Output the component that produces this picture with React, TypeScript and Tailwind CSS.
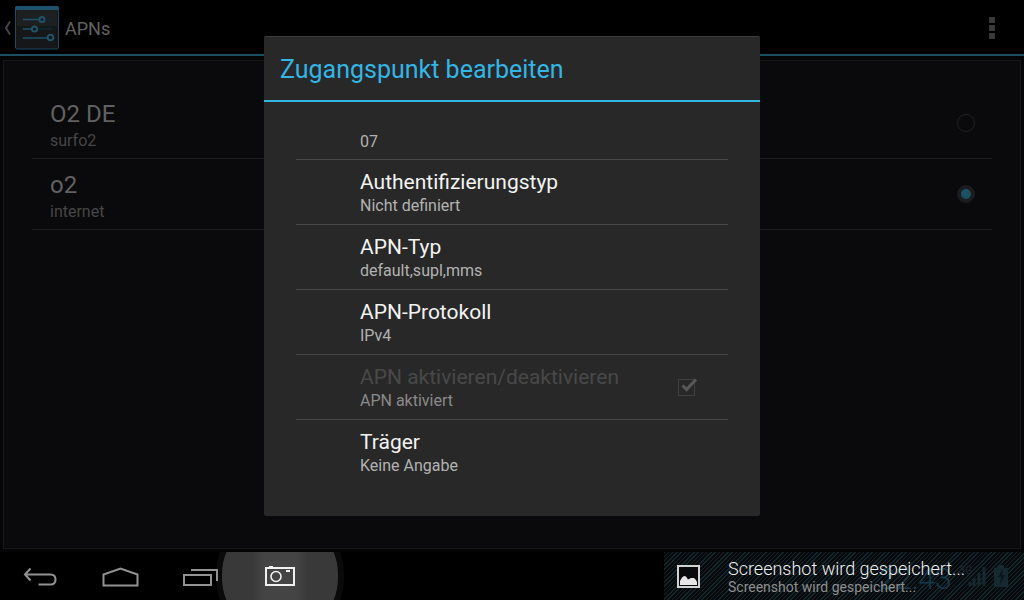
import React from "react";

type Apn = { name: string; apn: string; selected: boolean };

const apns: Apn[] = [
  { name: "O2 DE", apn: "surfo2", selected: false },
  { name: "o2", apn: "internet", selected: true },
];

const settings = [
  { title: "Authentifizierungstyp", summary: "Nicht definiert" },
  { title: "APN-Typ", summary: "default,supl,mms" },
  { title: "APN-Protokoll", summary: "IPv4" },
];

function SettingsIcon() {
  return (
    <svg width="44" height="44" viewBox="0 0 44 44" aria-hidden="true">
      <rect x="0.5" y="0.5" width="43" height="42.5" rx="2" fill="#161719" stroke="#1c4c60" />
      <rect x="2" y="4" width="40" height="16" fill="#1e1f21" />
      <rect x="0" y="0" width="44" height="4" rx="1.5" fill="#1e526a" />
      <g stroke="#1e5368" strokeWidth="1.5" fill="none">
        <path d="M8 13.500H24M8 23H16M8 32H32" />
        <circle cx="27" cy="13.500" r="2.6" strokeWidth="2" />
        <circle cx="19.500" cy="23" r="2.6" strokeWidth="2" />
        <circle cx="35.500" cy="31.500" r="2.8" strokeWidth="2" />
      </g>
      <path d="M30 13.500H37M23 23H37" stroke="#0e2a3a" strokeWidth="1.500" />
    </svg>
  );
}

function Header() {
  return (
    <header className="flex h-14 shrink-0 items-center border-b-2 border-[#1c4f63] bg-black pl-1 pr-[29px] pt-0.5">
      <button type="button" aria-label="Zurück" className="flex items-center gap-1">
        <svg width="7" height="16" viewBox="0 0 7 16" aria-hidden="true">
          <path d="M6 1.500L2 8L6 14.500" fill="none" stroke="#454545" strokeWidth="2" />
        </svg>
        <SettingsIcon />
      </button>
      <h1 className="ml-1.5 pt-0.5 text-lg text-[#616161]">APNs</h1>
      <button type="button" aria-label="Weitere Optionen" className="ml-auto flex flex-col gap-0.5">
        <span className="size-1.5 bg-[#3a3a3a]" />
        <span className="size-1.5 bg-[#3a3a3a]" />
        <span className="size-1.5 bg-[#3a3a3a]" />
      </button>
    </header>
  );
}

function ApnList() {
  return (
    <section className="flex flex-1 flex-col bg-[#050506] px-[3px] pb-[3px] pt-1">
      <div className="flex-1 border border-[#17171a] bg-[#0a0a0c] px-7 pt-[27px]">
        {apns.map((a) => (
          <label key={a.name} className="flex h-[71px] items-center border-b border-[#1c1c1e] pl-[18px] pr-[17px]">
            <span className="flex flex-1 flex-col pt-1">
              <span className="text-2xl leading-8 text-[#616161]">{a.name}</span>
              <span className="text-base leading-[22px] text-[#464646]">{a.apn}</span>
            </span>
            <input
              type="radio"
              name="apn"
              defaultChecked={a.selected}
              className="size-[18px] appearance-none rounded-full border border-[#222224] checked:border-[4px] checked:border-[#1b1c1e] checked:bg-[#1e5065]"
            />
          </label>
        ))}
      </div>
    </section>
  );
}

function EditDialog() {
  const row = "flex h-[65px] items-center border-b border-[#484848] pl-16 pr-[30px] pt-0.5";
  return (
    <div
      role="dialog"
      aria-labelledby="dialog-title"
      className="w-[496px] max-w-full rounded-[2px] border-t border-[#3d3d3d] bg-[#282828]"
    >
      <h2 id="dialog-title" className="h-[65px] border-b-2 border-[#33b5e5] px-4 text-[25px] leading-[66px] text-[#33b5e5]">
        Zugangspunkt bearbeiten
      </h2>
      <div className="px-8 pb-[31px] pt-[30px]">
        <p className="border-b border-[#484848] pb-[7px] pl-16 text-base leading-5 text-[#b2b2b2]">07</p>
        {settings.map((s) => (
          <button key={s.title} type="button" className={`${row} w-full text-left`}>
            <span className="flex flex-col">
              <span className="text-[21px] leading-[26px] text-[#f3f3f3]">{s.title}</span>
              <span className="text-base leading-[22px] text-[#b2b2b2]">{s.summary}</span>
            </span>
          </button>
        ))}
        <label className={row}>
          <span className="flex flex-1 flex-col">
            <span className="text-[21px] leading-[26px] text-[#484848]">APN aktivieren/deaktivieren</span>
            <span className="text-base leading-[22px] text-[#8a8a8a]">APN aktiviert</span>
          </span>
          <span className="grid pb-1">
            <input
              type="checkbox"
              defaultChecked
              disabled
              className="col-start-1 row-start-1 ml-px mt-0.5 size-[17px] appearance-none border border-[#404040]"
            />
            <svg className="col-start-1 row-start-1" width="21" height="19" viewBox="0 0 21 19" aria-hidden="true">
              <path d="M5.500 8.500L9.500 12.500L19 2.500" fill="none" stroke="#585858" strokeWidth="3" />
            </svg>
          </span>
        </label>
        <button type="button" className="flex h-[65px] w-full items-center pl-16 pt-px text-left">
          <span className="flex flex-col">
            <span className="text-[21px] leading-[26px] text-[#f3f3f3]">Träger</span>
            <span className="text-base leading-[22px] text-[#b2b2b2]">Keine Angabe</span>
          </span>
        </button>
      </div>
    </div>
  );
}

function Notification() {
  return (
    <div
      role="status"
      className="relative ml-auto flex w-[360px] items-center bg-[#07090b] bg-[repeating-linear-gradient(135deg,#12262d_0px,#12262d_1px,transparent_1px,transparent_3px)] pl-[13px]"
    >
      <div className="absolute inset-y-0 right-4 flex items-center">
        <span className="pt-1 text-[30px] font-light text-[#14394a]">22:43</span>
        <span className="mb-3 ml-2 text-[10px] text-[#1b2a31]">3G</span>
        <svg className="-ml-1" width="18" height="22" viewBox="0 0 18 22" aria-hidden="true">
          <path d="M2 21v-4M6 21v-8M11 21V8M16 21V2" stroke="#162830" strokeWidth="3" />
        </svg>
        <svg className="ml-2" width="14" height="22" viewBox="0 0 14 22" aria-hidden="true">
          <path d="M0 3h4V0h6v3h4v19H0z" fill="#162830" />
          <path d="M9 4L4 12h3l-1 7l5-9H8z" fill="#0a171d" />
        </svg>
      </div>
      <svg className="relative shrink-0" width="23" height="23" viewBox="0 0 23 23" aria-hidden="true">
        <rect x="1" y="1" width="21" height="21" fill="#090a0b" stroke="#d2d2d2" strokeWidth="2" />
        <path d="M3 20v-4l2-3.500l2-1.500l2 .5l2 3l3-1.500h3l2 2l1 2v3z" fill="#e6e6e6" />
      </svg>
      <div className="relative ml-7 whitespace-nowrap pt-0.5">
        <p className="text-lg font-light leading-5 text-[#f0f0f0]">Screenshot wird gespeichert...</p>
        <p className="text-sm leading-4 text-[#8f8f8f]">Screenshot wird gespeichert...</p>
      </div>
    </div>
  );
}

function NavBar() {
  const button = "relative z-10 flex w-20 items-center justify-center pt-0.5";
  return (
    <nav className="flex h-12 shrink-0 overflow-hidden bg-black" aria-label="Systemleiste">
      <button type="button" aria-label="Zurück" className={button}>
        <svg width="34" height="20" viewBox="0 0 34 20" fill="none" stroke="#929292" strokeWidth="2" aria-hidden="true">
          <path d="M7.500 1.500L2 7.500L7.500 13.500M2 7.500H27.500Q32.500 7.500 32.500 12.500T27.500 17.500H15.500" />
        </svg>
      </button>
      <button type="button" aria-label="Startseite" className={button}>
        <svg width="37" height="20" viewBox="0 0 37 20" fill="none" stroke="#929292" strokeWidth="2" aria-hidden="true">
          <path d="M1.500 18.500V7.500L18.500 1.500L35.500 7.500V18.500Z" />
        </svg>
      </button>
      <button type="button" aria-label="Letzte Apps" className={button}>
        <svg width="35" height="18" viewBox="0 0 35 18" fill="none" stroke="#929292" strokeWidth="2" aria-hidden="true">
          <path d="M1 7H28V17H1ZM8 2H34V13" />
        </svg>
      </button>
      <button
        type="button"
        aria-label="Screenshot aufnehmen"
        className="-mx-[18px] -my-9 flex w-[116px] items-center justify-center rounded-full bg-[linear-gradient(90deg,#383938_0,#383938_26%,#434443_36%,#434443_64%,#383938_74%)] shadow-[0_0_0_6px_#0a0a0b]"
      >
        <svg width="30" height="20" viewBox="0 0 30 20" fill="none" stroke="#f0f0f0" aria-hidden="true">
          <path d="M1 2H29V19H1Z" strokeWidth="2" />
          <path d="M4 .5H8" strokeWidth="1" />
          <path d="M21 5H25" strokeWidth="2" />
          <circle cx="11" cy="10.500" r="5" strokeWidth="1.600" />
        </svg>
      </button>
      <Notification />
    </nav>
  );
}

export default function App() {
  return (
    <div className="flex min-h-screen flex-col bg-black font-['Roboto',sans-serif]">
      <main className="relative flex flex-1 flex-col">
        <Header />
        <ApnList />
        <div className="absolute inset-0 flex items-center justify-center">
          <EditDialog />
        </div>
      </main>
      <NavBar />
    </div>
  );
}
